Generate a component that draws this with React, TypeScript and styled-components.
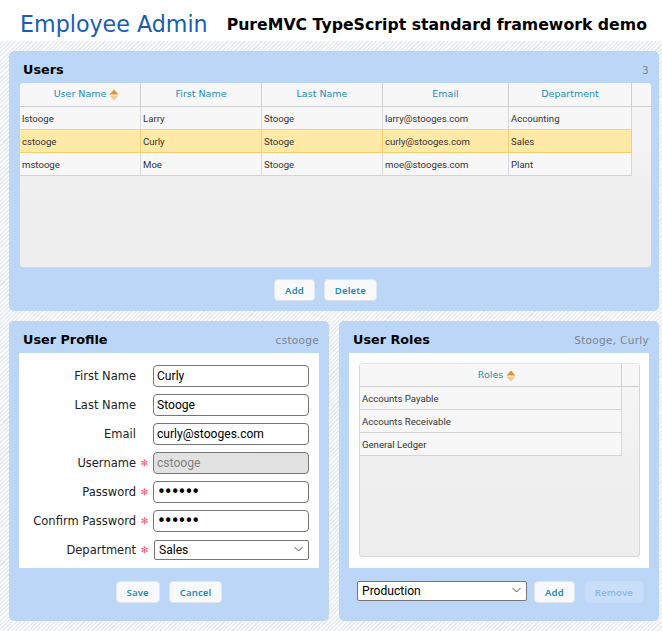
import React from "react";
import styled, { createGlobalStyle } from "styled-components";

const Global = createGlobalStyle`
  html, body { margin: 0; padding: 0; background: #fff; }
  body { font-family: "DejaVu Sans", Verdana, sans-serif; }
`;

const Page = styled.div`
  width: 662px;
  height: 631px;
  overflow: hidden;
`;

const Header = styled.header`
  height: 41px;
  box-sizing: border-box;
  display: flex;
  align-items: center;
  padding: 6px 0 0 20px;
  background: #fff;
`;

const Title = styled.h1`
  margin: 0 19px 0 0;
  font-size: 22.2px;
  font-weight: 400;
  color: #1a5cb5;
  white-space: nowrap;
`;

const Tagline = styled.div`
  font-size: 15.72px;
  font-weight: 700;
  color: #000;
  white-space: nowrap;
  padding-top: 2px;
`;

const Desktop = styled.main`
  height: 590px;
  box-sizing: border-box;
  padding: 10px 3px 0 9px;
  display: grid;
  grid-template-columns: 320px 320px;
  grid-template-rows: 260px 300px;
  column-gap: 10px;
  row-gap: 10px;
  background: repeating-linear-gradient(135deg, #fff 0 1.5px, #e6ebf2 1.5px 3px);
`;

const Panel = styled.section<{ $wide?: boolean }>`
  grid-column: ${(p) => (p.$wide ? "1 / 3" : "auto")};
  background: #bcd6f8;
  border-radius: 5px;
  display: flex;
  flex-direction: column;
  min-width: 0;
`;

const PanelHead = styled.div`
  height: 32px;
  flex: none;
  box-sizing: border-box;
  padding: 4px 10px 0 14px;
  display: flex;
  align-items: center;
  justify-content: space-between;
`;

const PanelTitle = styled.h2`
  margin: 0;
  font-size: 12.8px;
  font-weight: 700;
  color: #000;
`;

const PanelStatus = styled.span`
  font-size: 10.5px;
  letter-spacing: 0.3px;
  color: #7c8590;
  padding-top: 2px;
`;

const UsersBody = styled.div`
  margin: 0 8px 0 11px;
`;

const WhiteBody = styled.div<{ $pad?: boolean }>`
  height: 215px;
  flex: none;
  margin: 0 10px;
  box-sizing: border-box;
  background: #fff;
  padding: ${(p) => (p.$pad ? "10px 9px 11px 10px" : "8px 10px 0 0")};
`;

const GridRow = styled.div<{ $cols: string; $head?: boolean }>`
  display: grid;
  grid-template-columns: ${(p) => p.$cols};
  height: ${(p) => (p.$head ? 24 : 23)}px;
  box-sizing: border-box;
  border-bottom: ${(p) => (p.$head ? "1px solid #cfcfcf" : "0")};
  background: ${(p) => (p.$head ? "#f7f7f7" : "transparent")};
`;

const Grid = styled.div<{ $height: number; $bare?: boolean }>`
  height: ${(p) => p.$height}px;
  box-sizing: border-box;
  background: linear-gradient(#f7f7f7, #eee 130px);
  border: 1px solid #d8d8d8;
  border-top: ${(p) => (p.$bare ? "0" : "1px solid #e4e4e4")};
  border-left-width: ${(p) => (p.$bare ? 0 : 1)}px;
  border-right-width: ${(p) => (p.$bare ? 0 : 1)}px;
  border-radius: 4px;
  overflow: hidden;
  ${GridRow}:first-child {
    height: ${(p) => (p.$bare ? 24 : 23)}px;
  }
`;

const HeadCell = styled.div`
  display: flex;
  align-items: center;
  justify-content: center;
  padding-bottom: 2px;
  border-right: 1px solid #cfcfcf;
  font-size: 9.5px;
  color: #1f8cb8;
  &:last-child { border-right: 0; }
`;

const SortLabel = styled.span`
  position: relative;
  svg { position: absolute; left: calc(100% + 3px); top: 1px; }
`;

const Cell = styled.div<{ $selected?: boolean }>`
  display: flex;
  align-items: center;
  padding-left: 2px;
  box-sizing: border-box;
  background: ${(p) => (p.$selected ? "#ffe9a6" : "#f7f7f7")};
  border-right: 1px solid ${(p) => (p.$selected ? "#f4cf6c" : "#d8d8d8")};
  border-bottom: 1px solid ${(p) => (p.$selected ? "#f4cf6c" : "#d4d4d4")};
  font-family: Roboto, sans-serif;
  font-size: 9.6px;
  color: #333;
  white-space: nowrap;
  overflow: hidden;
`;

const Footer = styled.div<{ $top: number; $shift?: number }>`
  flex: 1;
  display: flex;
  align-items: flex-start;
  justify-content: center;
  gap: 9px;
  padding-top: ${(p) => p.$top}px;
  padding-right: ${(p) => p.$shift || 0}px;
`;

const Button = styled.button<{ $off?: boolean }>`
  height: 22px;
  padding: 0 10px;
  box-sizing: border-box;
  border: 1px solid ${(p) => (p.$off ? "#c4dbf7" : "#e2e6ea")};
  border-radius: 4px;
  background: ${(p) => (p.$off ? "#c9dff9" : "#f8f9fa")};
  color: ${(p) => (p.$off ? "#8bbce0" : "#1f8cb8")};
  font-family: "Noto Sans", sans-serif;
  font-size: 9.6px;
  font-weight: 600;
  letter-spacing: 0.1px;
`;

const FormRow = styled.div`
  height: 29px;
  display: grid;
  grid-template-columns: 117px 17px 156px;
  align-items: center;
  flex: none;
`;

const Label = styled.label`
  text-align: right;
  font-size: 11.5px;
  color: #222;
  white-space: nowrap;
`;

const Required = styled.span`
  color: #e8505f;
  font-size: 9px;
  text-align: center;
`;

const Input = styled.input`
  width: 156px;
  height: 22px;
  box-sizing: border-box;
  border: 1px solid #767676;
  border-radius: 4px;
  padding: 0 2px 0 3px;
  font-family: Roboto, sans-serif;
  font-size: 12.1px;
  color: #000;
  background: ${(p) => (p.disabled ? "#e2e2e2" : "#fff")};
  &:disabled { color: #808080; }
  &[type="password"] {
    font-family: "DejaVu Sans", sans-serif;
    font-size: 15px;
    letter-spacing: -2px;
  }
`;

const SelectWrap = styled.div<{ $width: number; $inset?: boolean }>`
  position: relative;
  width: ${(p) => p.$width}px;
  height: 20px;
  margin: -1px 0 1px ${(p) => (p.$inset ? 1 : 0)}px;
  svg { position: absolute; right: 6px; top: 7px; pointer-events: none; }
`;

const Select = styled.select`
  appearance: none;
  width: 100%;
  height: 100%;
  box-sizing: border-box;
  border: 1px solid #767676;
  border-radius: 2px;
  padding: 0 4px;
  font-family: Roboto, sans-serif;
  font-size: 12.1px;
  color: #000;
  background: #fff;
`;

const RolesFooter = styled(Footer)`
  justify-content: flex-start;
  padding-left: 18px;
  gap: 0;
  button:first-of-type { margin-left: 7px; }
  button:last-of-type { margin-left: 9px; }
`;

function SortIcon() {
  return (
    <svg width="10" height="12" viewBox="0 0 10 12">
      <path d="M5 .5 9.500 5.500H.5Z" fill="#e0962f" />
      <path d="M.5 6.500H9.500L5 11.500Z" fill="#f1cc96" />
    </svg>
  );
}

function Chevron() {
  return (
    <svg width="9" height="6" viewBox="0 0 9 6">
      <path d="M.5 1 4.500 5 8.500 1" fill="none" stroke="#555" strokeWidth="1" />
    </svg>
  );
}

const userCols = "121px 121px 121px 126px 123px 1fr";
const users = [
  ["lstooge", "Larry", "Stooge", "larry@stooges.com", "Accounting"],
  ["cstooge", "Curly", "Stooge", "curly@stooges.com", "Sales"],
  ["mstooge", "Moe", "Stooge", "moe@stooges.com", "Plant"],
];
const roleCols = "262px 1fr";
const roles = ["Accounts Payable", "Accounts Receivable", "General Ledger"];

const fields = [
  { label: "First Name", value: "Curly" },
  { label: "Last Name", value: "Stooge" },
  { label: "Email", value: "curly@stooges.com" },
  { label: "Username", value: "cstooge", required: true, disabled: true },
  { label: "Password", value: "secret", required: true, type: "password" },
  { label: "Confirm Password", value: "secret", required: true, type: "password" },
];

export default function App() {
  return (
    <Page>
      <Global />
      <Header>
        <Title>Employee Admin</Title>
        <Tagline>PureMVC TypeScript standard framework demo</Tagline>
      </Header>
      <Desktop>
        <Panel $wide>
          <PanelHead>
            <PanelTitle>Users</PanelTitle>
            <PanelStatus>3</PanelStatus>
          </PanelHead>
          <UsersBody>
            <Grid $height={185} $bare>
              <GridRow $head $cols={userCols}>
                <HeadCell><SortLabel>User Name<SortIcon /></SortLabel></HeadCell>
                <HeadCell>First Name</HeadCell>
                <HeadCell>Last Name</HeadCell>
                <HeadCell>Email</HeadCell>
                <HeadCell>Department</HeadCell>
                <HeadCell />
              </GridRow>
              {users.map((row, i) => (
                <GridRow key={row[0]} $cols={userCols}>
                  {row.map((v) => (
                    <Cell key={v} $selected={i === 1}>{v}</Cell>
                  ))}
                </GridRow>
              ))}
            </Grid>
          </UsersBody>
          <Footer $top={11} $shift={17}>
            <Button>Add</Button>
            <Button>Delete</Button>
          </Footer>
        </Panel>

        <Panel>
          <PanelHead>
            <PanelTitle>User Profile</PanelTitle>
            <PanelStatus>cstooge</PanelStatus>
          </PanelHead>
          <WhiteBody>
            {fields.map((f) => (
              <FormRow key={f.label}>
                <Label>{f.label}</Label>
                <Required>{f.required ? "✻" : ""}</Required>
                <Input readOnly value={f.value} type={f.type || "text"} disabled={f.disabled} />
              </FormRow>
            ))}
            <FormRow>
              <Label>Department</Label>
              <Required>✻</Required>
              <SelectWrap $width={155} $inset>
                <Select defaultValue="Sales">
                  <option>Sales</option>
                </Select>
                <Chevron />
              </SelectWrap>
            </FormRow>
          </WhiteBody>
          <Footer $top={13}>
            <Button>Save</Button>
            <Button>Cancel</Button>
          </Footer>
        </Panel>

        <Panel>
          <PanelHead>
            <PanelTitle>User Roles</PanelTitle>
            <PanelStatus>Stooge, Curly</PanelStatus>
          </PanelHead>
          <WhiteBody $pad>
            <Grid $height={194}>
              <GridRow $head $cols={roleCols}>
                <HeadCell><SortLabel>Roles<SortIcon /></SortLabel></HeadCell>
                <HeadCell />
              </GridRow>
              {roles.map((r) => (
                <GridRow key={r} $cols={roleCols}>
                  <Cell>{r}</Cell>
                </GridRow>
              ))}
            </Grid>
          </WhiteBody>
          <RolesFooter $top={13}>
            <SelectWrap $width={170}>
              <Select defaultValue="Production">
                <option>Production</option>
              </Select>
              <Chevron />
            </SelectWrap>
            <Button>Add</Button>
            <Button $off>Remove</Button>
          </RolesFooter>
        </Panel>
      </Desktop>
    </Page>
  );
}
